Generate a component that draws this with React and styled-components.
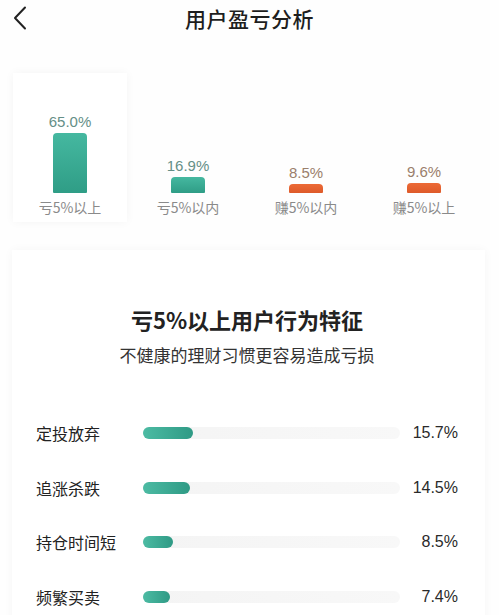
import React from "react";
import styled, { createGlobalStyle } from "styled-components";

const GlobalStyle = createGlobalStyle`
  html, body {
    margin: 0;
    padding: 0;
    background: #ffffff;
  }
  body {
    font-family: "Noto Sans CJK SC", "Noto Sans", sans-serif;
    color: #222;
  }
`;

const Page = styled.div`
  width: 499px;
  height: 615px;
  overflow: hidden;
  background: #fefefe;
`;

const Header = styled.header`
  position: relative;
  height: 36px;
  display: flex;
  align-items: center;
  justify-content: center;
`;

const BackButton = styled.button`
  position: absolute;
  left: 9px;
  top: 4px;
  width: 22px;
  height: 28px;
  padding: 0;
  border: none;
  background: none;
  display: flex;
  align-items: center;
  justify-content: center;
`;

const Title = styled.h1`
  margin: 0;
  font-size: 21px;
  font-weight: 500;
  letter-spacing: 0.5px;
  color: #1e1e1e;
`;

const ChartGrid = styled.div`
  display: grid;
  grid-template-columns: repeat(4, 118px);
  padding: 37px 0 0 11px;
`;

const Column = styled.div`
  height: 149px;
  margin: 0 2px;
  display: flex;
  flex-direction: column;
  align-items: center;
  justify-content: flex-end;
  padding-bottom: 6px;
  box-sizing: border-box;
  background: ${(p) => (p.$active ? "#ffffff" : "transparent")};
  box-shadow: ${(p) => (p.$active ? "0 0 9px rgba(0, 0, 0, 0.045)" : "none")};
`;

const Value = styled.div`
  font-family: "Liberation Sans", "Noto Sans CJK SC", sans-serif;
  font-size: 15px;
  line-height: 18px;
  margin-bottom: 2px;
  color: ${(p) => (p.$tone === "gain" ? "#9a7f6c" : "#658f87")};
`;

const Bar = styled.div`
  width: 34px;
  border-radius: 4px 4px 1px 1px;
  background: ${(p) =>
    p.$tone === "gain"
      ? "linear-gradient(180deg, #ec6a36, #de5a2a)"
      : "linear-gradient(180deg, #45b8a0, #2f9d86)"};
`;

const Caption = styled.div`
  margin-top: 5px;
  font-size: 14px;
  line-height: 18px;
  color: #8a8a8a;
`;

const Card = styled.section`
  margin: 28px 14px 0 12px;
  padding: 54px 27px 10px 24px;
  background: #ffffff;
  box-shadow: 0 0 9px rgba(0, 0, 0, 0.04);
  min-height: 360px;
`;

const CardTitle = styled.h2`
  margin: 0;
  text-align: center;
  font-size: 22px;
  line-height: 30px;
  font-weight: 700;
  color: #222;
`;

const CardSubtitle = styled.p`
  margin: 10px 0 0;
  text-align: center;
  font-size: 17px;
  line-height: 22px;
  color: #333;
`;

const RowList = styled.div`
  margin-top: 40px;
  display: flex;
  flex-direction: column;
`;

const Row = styled.div`
  display: grid;
  grid-template-columns: 107px 257px 1fr;
  align-items: center;
  height: 54.5px;
`;

const RowLabel = styled.div`
  font-size: 16px;
  color: #222;
`;

const Track = styled.div`
  height: 12px;
  border-radius: 6px;
  background: linear-gradient(90deg, #f4f4f4, #f8f8f8);
`;

const Fill = styled.div`
  height: 100%;
  border-radius: 6px;
  background: linear-gradient(90deg, #4cbba3, #2f9a85);
`;

const RowValue = styled.div`
  text-align: right;
  font-family: "Liberation Sans", "Noto Sans CJK SC", sans-serif;
  font-size: 16px;
  color: #2a2a2a;
`;

const distribution = [
  { value: "65.0%", label: "亏5%以上", height: 60, tone: "loss", active: true },
  { value: "16.9%", label: "亏5%以内", height: 16, tone: "loss" },
  { value: "8.5%", label: "赚5%以内", height: 9, tone: "gain" },
  { value: "9.6%", label: "赚5%以上", height: 10, tone: "gain" },
];

const behaviours = [
  { label: "定投放弃", pct: 15.7 },
  { label: "追涨杀跌", pct: 14.5 },
  { label: "持仓时间短", pct: 8.5 },
  { label: "频繁买卖", pct: 7.4 },
];

const ChevronLeft = () => (
  <svg width="14" height="24" viewBox="0 0 14 24" fill="none">
    <path d="M12 1.5 L2 12 L12 22.5" stroke="#222" strokeWidth="2" strokeLinecap="round" strokeLinejoin="round" />
  </svg>
);

export default function App() {
  return (
    <Page>
      <GlobalStyle />
      <Header>
        <BackButton aria-label="返回">
          <ChevronLeft />
        </BackButton>
        <Title>用户盈亏分析</Title>
      </Header>

      <ChartGrid>
        {distribution.map((d) => (
          <Column key={d.label} $active={d.active}>
            <Value $tone={d.tone}>{d.value}</Value>
            <Bar $tone={d.tone} style={{ height: d.height }} />
            <Caption>{d.label}</Caption>
          </Column>
        ))}
      </ChartGrid>

      <Card>
        <CardTitle>亏5%以上用户行为特征</CardTitle>
        <CardSubtitle>不健康的理财习惯更容易造成亏损</CardSubtitle>
        <RowList>
          {behaviours.map((b) => (
            <Row key={b.label}>
              <RowLabel>{b.label}</RowLabel>
              <Track>
                <Fill style={{ width: Math.round(6 + b.pct * 2.8) }} />
              </Track>
              <RowValue>{b.pct.toFixed(1)}%</RowValue>
            </Row>
          ))}
        </RowList>
      </Card>
    </Page>
  );
}
